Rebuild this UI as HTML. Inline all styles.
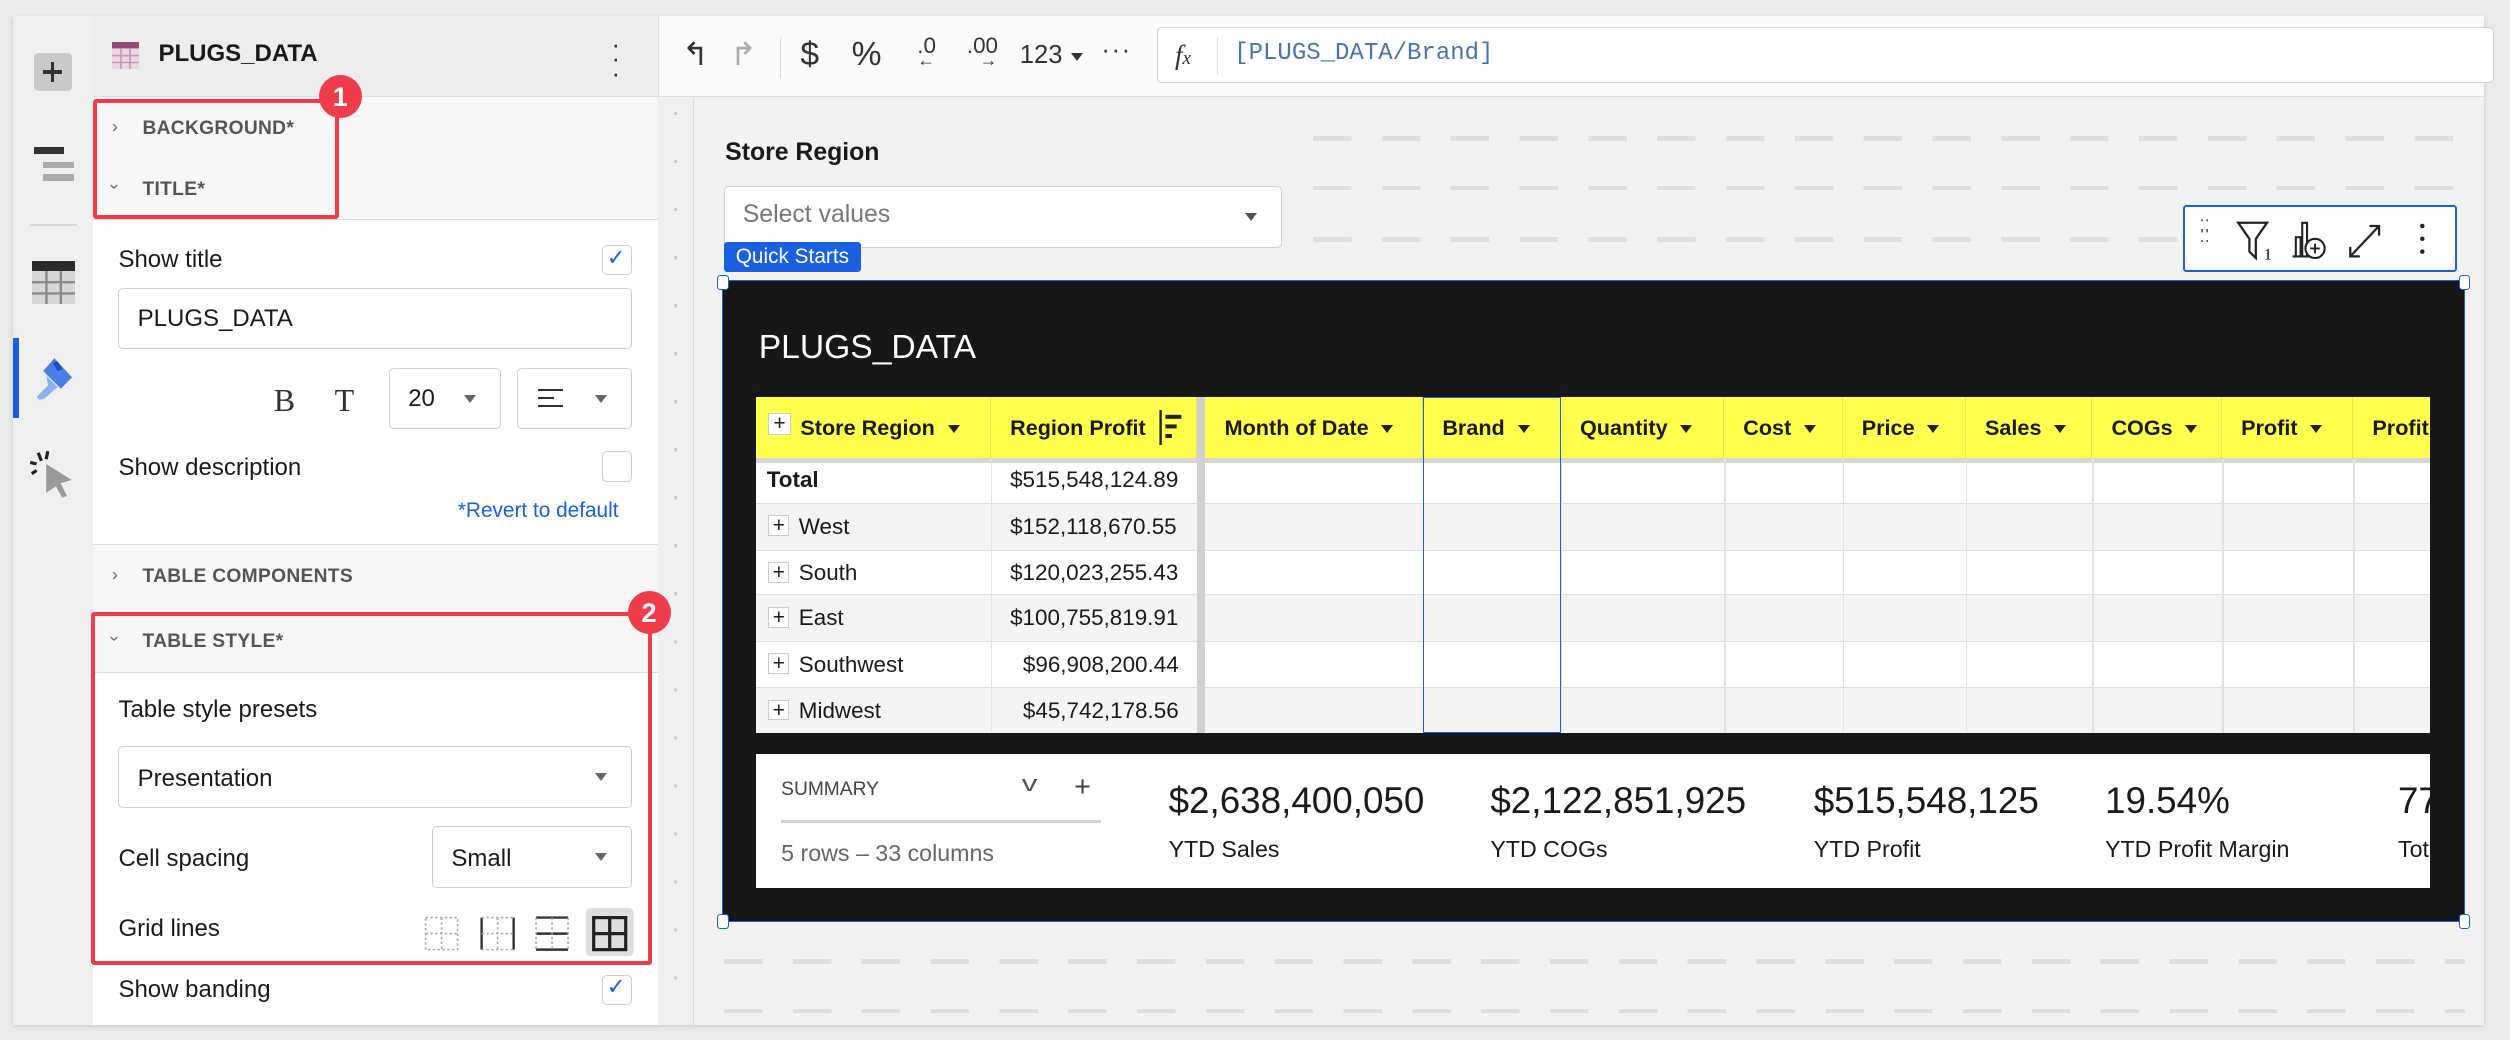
<!DOCTYPE html>
<html><head><meta charset="utf-8"><style>
html,body{margin:0;padding:0;background:#ebebeb;width:2510px;height:1040px;overflow:hidden}
#w{zoom:1.6008;position:relative;width:1568px;height:650px;font-family:"Liberation Sans",sans-serif;color:#1a1a1a}
.a{position:absolute}
.t{position:absolute;white-space:nowrap;line-height:1}
.sec{position:absolute;left:58px;width:353px;background:#f7f7f7;border-bottom:1px solid #dcdcdc;border-top:1px solid #dcdcdc}
.sec span{position:absolute;left:31px;font-size:12px;font-weight:bold;color:#555;letter-spacing:.2px}
.sec i{position:absolute;left:12px;font-style:normal;font-size:11px;color:#666}
.box{position:absolute;background:#fff;border:1px solid #d0d0d0;border-radius:3px;box-sizing:border-box}
.tri{position:absolute;width:0;height:0;border-left:4px solid transparent;border-right:4px solid transparent;border-top:5px solid #666}
.cb{position:absolute;width:19px;height:19px;border:1px solid #cfcfcf;border-radius:3px;box-sizing:border-box;background:#fff}
.lbl{font-size:15px}
.hd{position:absolute;top:248px;height:39px;border-right:1px solid #e6e64a;box-sizing:border-box;font-size:13.5px;font-weight:bold;line-height:39px;padding-left:12px;white-space:nowrap;overflow:hidden}
.hd b{display:inline-block;width:0;height:0;border-left:4px solid transparent;border-right:4px solid transparent;border-top:5px solid #222;margin-left:8px;vertical-align:middle}
.row{position:absolute;left:472px;width:1046px;border-bottom:1px solid #dedede;box-sizing:border-box}
.vl{position:absolute;top:287px;height:171px;width:1px;background:#e2e2e2}
.cell{position:absolute;font-size:14px;white-space:nowrap}
.pl{position:absolute;left:480px;width:13px;height:13px;border:1px solid #ccc;background:#fff;font-size:13px;line-height:12px;text-align:center;box-sizing:border-box}
.kv{position:absolute;top:487px;font-size:23px;white-space:nowrap}
.kl{position:absolute;top:522px;font-size:14.5px;white-space:nowrap}
.dash{position:absolute;left:820px;width:720px;height:3px;background:repeating-linear-gradient(90deg,#dedede 0 24px,transparent 24px 43px)}
</style></head><body><div id="w">
<div class="a" style="left:8px;top:10px;width:1544px;height:630px;background:#f2f2f2;box-shadow:0 1px 3px rgba(0,0,0,.15)"></div>
<div class="a" style="left:8px;top:10px;width:50px;height:630px;background:#efefef;border-right:1px solid #dcdcdc"></div>
<div class="a" style="left:21px;top:33px;width:24px;height:24px;background:#c9c9c9;border-radius:3px"></div>
<div class="a" style="left:27px;top:44px;width:12px;height:2px;background:#333"></div>
<div class="a" style="left:32px;top:39px;width:2px;height:12px;background:#333"></div>
<div class="a" style="left:21px;top:92px;width:19px;height:4px;background:#333"></div>
<div class="a" style="left:27px;top:101px;width:19px;height:4px;background:#aaa"></div>
<div class="a" style="left:27px;top:109px;width:19px;height:4px;background:#aaa"></div>
<div class="a" style="left:19px;top:140px;width:29px;height:1px;background:#d5d5d5"></div>
<div class="a" style="left:20px;top:163px;width:27px;height:6px;background:#2b2b2b"></div>
<svg class="a" style="left:20px;top:169px" width="27" height="21"><rect width="27" height="21" fill="#d7d7d7"/><path d="M0 7H27M0 14H27M9 0V21M18 0V21" stroke="#8a8a8a" stroke-width="1.5"/></svg>
<div class="a" style="left:8px;top:211px;width:4px;height:50px;background:#1a5fe0"></div>
<svg class="a" style="left:20px;top:222px" width="27" height="30"><path d="M14 2 L25 14 L18 21 L7 10 Z" fill="#4a7fe6"/><path d="M9 13 L16 20 L8 27 Q4 29 3 26 L10 19 Z" fill="#8fb0f0"/><path d="M13 5 L16 4 L19 9 L16 10Z" fill="#1f4fb0"/></svg>
<svg class="a" style="left:17px;top:280px" width="32" height="32"><path d="M12 10 L28 20 L21 22 L25 30 L22 31 L18 24 L12 28 Z" fill="#9a9a9a"/><path d="M7 3 L9 8 M2 9 L6 10 M3 16 L6 14 M13 2 L12 7" stroke="#222" stroke-width="2"/></svg>
<div class="a" style="left:58px;top:10px;width:353px;height:630px;background:#fff;border-right:1px solid #dcdcdc"></div>
<div class="a" style="left:58px;top:10px;width:353px;height:50px;background:#ededed"></div>
<svg class="a" style="left:70px;top:26px" width="17" height="17"><rect width="17" height="17" fill="#ead7e3"/><rect width="17" height="4" fill="#8e4b75"/><path d="M0 8.5H17M0 12.8H17M5.6 4V17M11.3 4V17" stroke="#c59ab7" stroke-width="1"/></svg>
<div class="t" style="left:99px;top:26px;font-size:15px;font-weight:bold">PLUGS_DATA</div>
<div class="t" style="left:382px;top:24px;font-size:16px;color:#333;line-height:.55">·<br>·<br>·</div>
<div class="sec" style="top:60px;height:38px"><i style="top:12px">›</i><span style="top:13px">BACKGROUND*</span></div>
<div class="sec" style="top:99px;height:38px;border-top:0"><i style="top:11px;transform:rotate(90deg)">›</i><span style="top:13px">TITLE*</span></div>
<div class="t lbl" style="left:74px;top:155px">Show title</div>
<div class="cb" style="left:376px;top:153px"></div><div class="t" style="left:379px;top:154px;color:#1a5fe0;font-size:14px">✓</div>
<div class="box" style="left:74px;top:180px;width:321px;height:38px"></div>
<div class="t lbl" style="left:86px;top:192px">PLUGS_DATA</div>
<div class="t" style="left:171px;top:240px;font-family:'Liberation Serif',serif;font-size:20px;color:#333">B</div>
<div class="t" style="left:209px;top:240px;font-family:'Liberation Serif',serif;font-size:20px;color:#333">T</div>
<div class="box" style="left:243px;top:230px;width:70px;height:38px"></div>
<div class="t lbl" style="left:255px;top:242px">20</div><div class="tri" style="left:290px;top:247px"></div>
<div class="box" style="left:323px;top:230px;width:72px;height:38px"></div>
<div class="a" style="left:336px;top:243px;width:16px;height:1.5px;background:#333"></div><div class="a" style="left:336px;top:248px;width:10px;height:1.5px;background:#333"></div><div class="a" style="left:336px;top:253px;width:16px;height:1.5px;background:#333"></div>
<div class="tri" style="left:372px;top:247px"></div>
<div class="t lbl" style="left:74px;top:285px">Show description</div>
<div class="cb" style="left:376px;top:282px"></div>
<div class="t" style="left:286px;top:313px;font-size:13px;color:#1a5fe0">*Revert to default</div>
<div class="sec" style="top:340px;height:39px"><i style="top:12px">›</i><span style="top:13px">TABLE COMPONENTS</span></div>
<div class="sec" style="top:380px;height:40px;border-top:0"><i style="top:12px;transform:rotate(90deg)">›</i><span style="top:14px">TABLE STYLE*</span></div>
<div class="t lbl" style="left:74px;top:436px">Table style presets</div>
<div class="box" style="left:74px;top:466px;width:321px;height:39px"></div>
<div class="t lbl" style="left:86px;top:479px">Presentation</div><div class="tri" style="left:372px;top:483px"></div>
<div class="t lbl" style="left:74px;top:529px">Cell spacing</div>
<div class="box" style="left:270px;top:516px;width:125px;height:39px"></div>
<div class="t lbl" style="left:282px;top:529px">Small</div><div class="tri" style="left:372px;top:533px"></div>
<div class="t lbl" style="left:74px;top:573px">Grid lines</div>
<svg class="a" style="left:265px;top:567px" width="132" height="30">
<g fill="none" stroke="#aaa" stroke-dasharray="1.5 1.5"><rect x="1" y="6" width="20" height="20"/><path d="M11 6V26M1 16H21"/></g>
<g fill="none"><path d="M36 6V26M56 6V26" stroke="#333" stroke-width="1.5"/><path d="M46 6V26M36 6H56M36 16H56M36 26H56" stroke="#aaa" stroke-dasharray="1.5 1.5"/></g>
<g fill="none"><path d="M70 6H90M70 16H90M70 26H90" stroke="#333" stroke-width="1.5"/><path d="M80 6V26M70 6V26M90 6V26" stroke="#aaa" stroke-dasharray="1.5 1.5"/></g>
<rect x="101" y="0" width="30" height="30" rx="3" fill="#dedede"/>
<g fill="none" stroke="#222" stroke-width="2"><rect x="106" y="6" width="20" height="20"/><path d="M116 6V26M106 16H126"/></g>
</svg>
<div class="t lbl" style="left:74px;top:611px">Show banding</div>
<div class="cb" style="left:376px;top:609px"></div><div class="t" style="left:379px;top:610px;color:#1a5fe0;font-size:14px">✓</div>
<div class="a" style="left:411px;top:61px;width:22px;height:579px;background:#efefef;border-right:1px solid #dadada"></div>
<div class="a" style="left:421px;top:70px;width:2px;height:560px;background:repeating-linear-gradient(180deg,#ccc 0 2px,transparent 2px 30px)"></div>
<div class="a" style="left:412px;top:10px;width:1140px;height:50px;background:#fafafa;border-bottom:1px solid #dcdcdc"></div>
<div class="t" style="left:426px;top:24px;font-size:20px;color:#333">↰</div>
<div class="t" style="left:456px;top:24px;font-size:20px;color:#aaa">↱</div>
<div class="a" style="left:487px;top:23px;width:1px;height:26px;background:#ddd"></div>
<div class="t" style="left:500px;top:24px;font-size:21px;color:#333">$</div>
<div class="t" style="left:532px;top:24px;font-size:21px;color:#333">%</div>
<div class="t" style="left:573px;top:22px;font-size:14px;color:#333">.0<br><span style="font-size:11px;position:relative;top:-6px">←</span></div>
<div class="t" style="left:604px;top:22px;font-size:14px;color:#333">.00<br><span style="font-size:11px;position:relative;top:-6px;left:8px">→</span></div>
<div class="t" style="left:637px;top:27px;font-size:16px;color:#333">123</div><div class="tri" style="left:669px;top:33px;border-top-color:#333"></div>
<div class="t" style="left:688px;top:24px;font-size:16px;color:#333;letter-spacing:1px">···</div>
<div class="box" style="left:723px;top:17px;width:835px;height:35px"></div>
<div class="t" style="left:734px;top:26px;font-size:17px;font-family:'Liberation Serif',serif;font-style:italic;color:#333">f<span style="font-size:12px">x</span></div>
<div class="a" style="left:760px;top:23px;width:1px;height:24px;background:#ddd"></div>
<div class="t" style="left:771px;top:26px;font-size:15px;font-family:'Liberation Mono',monospace;color:#4a72b0">[PLUGS_DATA/Brand]</div>
<div class="dash" style="top:85px"></div><div class="dash" style="top:116px"></div><div class="dash" style="top:148px"></div>
<div class="dash" style="top:599px;left:452px;width:1088px"></div><div class="dash" style="top:630px;left:452px;width:1088px"></div>
<div class="t" style="left:453px;top:88px;font-size:15.5px;font-weight:bold">Store Region</div>
<div class="box" style="left:452px;top:116px;width:349px;height:39px"></div>
<div class="t" style="left:464px;top:127px;font-size:15.5px;color:#777">Select values</div><div class="tri" style="left:778px;top:133px;border-top-color:#555"></div>
<div class="a" style="left:452px;top:151px;width:86px;height:19px;background:#1a5fe0;border-radius:2px;color:#fff;font-size:13px;line-height:19px;text-align:center">Quick Starts</div>
<div class="a" style="left:1364px;top:128px;width:171px;height:42px;background:#fff;border:1.5px solid #1a5fe0;border-radius:2px;box-sizing:border-box"></div>
<div class="t" style="left:1374px;top:138px;font-size:10px;line-height:.7;color:#555">⁚⁚<br>⁚⁚</div>
<svg class="a" style="left:1396px;top:136px" width="120" height="28">
<path d="M2 3H20L13 13V25L9 21V13Z" fill="none" stroke="#222" stroke-width="1.4"/><text x="18" y="26" font-size="10" font-family="Liberation Serif">1</text>
<path d="M38 24V12H41V24M42 24V3H45V24M36 24H50" fill="none" stroke="#222" stroke-width="1.3"/><circle cx="50" cy="19" r="6" fill="#fff" stroke="#222" stroke-width="1.3"/><path d="M47 19H53M50 16V22" stroke="#222" stroke-width="1.2"/>
<path d="M72 24L90 5M84 5H90V11M72 18V24H78" fill="none" stroke="#222" stroke-width="1.4"/>
<circle cx="117" cy="5" r="1.4" fill="#222"/><circle cx="117" cy="13" r="1.4" fill="#222"/><circle cx="117" cy="21" r="1.4" fill="#222"/>
</svg>
<div class="a" style="left:451px;top:175px;width:1089px;height:401px;background:#171717;border:1px solid #1a5fe0;box-sizing:border-box"></div>
<div class="a" style="left:448px;top:172px;width:6px;height:8px;background:#fff;border:1px solid #1a5fe0;border-radius:2px"></div>
<div class="a" style="left:448px;top:571px;width:6px;height:8px;background:#fff;border:1px solid #1a5fe0;border-radius:2px"></div>
<div class="a" style="left:1536px;top:172px;width:6px;height:8px;background:#fff;border:1px solid #1a5fe0;border-radius:2px"></div>
<div class="a" style="left:1536px;top:571px;width:6px;height:8px;background:#fff;border:1px solid #1a5fe0;border-radius:2px"></div>
<div class="t" style="left:474px;top:207px;font-size:21px;color:#fff">PLUGS_DATA</div>
<div class="a" style="left:472px;top:248px;width:1046px;height:39px;background:#ffff4d"></div>
<div class="hd" style="left:472px;width:147px;padding-left:28px">Store Region<b></b></div>
<div class="a" style="left:480px;top:258px;width:14px;height:14px;background:#fff;border:1px solid #ccc;box-sizing:border-box;font-size:13px;line-height:12px;text-align:center">+</div>
<div class="hd" style="left:619px;width:129px">Region Profit</div>
<svg class="a" style="left:724px;top:256px" width="16" height="22"><path d="M1 0V22" stroke="#222" stroke-width="1.5"/><rect x="4" y="3" width="10" height="2.5" fill="#222"/><rect x="4" y="9" width="7" height="2.5" fill="#222"/><rect x="4" y="15" width="4" height="2.5" fill="#222"/></svg>
<div class="hd" style="left:753px;width:136px">Month of Date<b></b></div>
<div class="hd" style="left:889px;width:86px">Brand<b></b></div>
<div class="hd" style="left:975px;width:102px">Quantity<b></b></div>
<div class="hd" style="left:1077px;width:74px">Cost<b></b></div>
<div class="hd" style="left:1151px;width:77px">Price<b></b></div>
<div class="hd" style="left:1228px;width:79px">Sales<b></b></div>
<div class="hd" style="left:1307px;width:81px">COGs<b></b></div>
<div class="hd" style="left:1388px;width:82px">Profit<b></b></div>
<div class="hd" style="left:1470px;width:48px;border-right:0">Profit</div>
<div class="a" style="left:472px;top:286px;width:1046px;height:3px;background:#d6d6d6"></div>
<div class="row" style="top:289px;height:26px;background:#fff"></div>
<div class="row" style="top:315px;height:29px;background:#f4f4f4"></div>
<div class="row" style="top:344px;height:28px;background:#fff"></div>
<div class="row" style="top:372px;height:29px;background:#f4f4f4"></div>
<div class="row" style="top:401px;height:29px;background:#fff"></div>
<div class="row" style="top:430px;height:28px;background:#f4f4f4;border-bottom:0"></div>
<div class="vl" style="left:619px"></div>
<div class="a" style="left:748px;top:248px;width:5px;height:210px;background:#d0d0d0"></div>
<div class="vl" style="left:975px"></div><div class="vl" style="left:1077px"></div><div class="vl" style="left:1151px"></div><div class="vl" style="left:1228px"></div><div class="vl" style="left:1307px"></div><div class="vl" style="left:1388px"></div><div class="vl" style="left:1470px"></div>
<div class="a" style="left:889px;top:248px;width:86px;height:210px;border:1px solid #1a5fe0;box-sizing:border-box"></div>
<div class="cell" style="left:479px;top:292px;font-weight:bold">Total</div>
<div class="cell" style="left:631px;top:292px">$515,548,124.89</div>
<div class="pl" style="top:322px">+</div><div class="cell" style="left:499px;top:321px">West</div><div class="cell" style="left:631px;top:321px">$152,118,670.55</div>
<div class="pl" style="top:351px">+</div><div class="cell" style="left:499px;top:350px">South</div><div class="cell" style="left:631px;top:350px">$120,023,255.43</div>
<div class="pl" style="top:379px">+</div><div class="cell" style="left:499px;top:378px">East</div><div class="cell" style="left:631px;top:378px">$100,755,819.91</div>
<div class="pl" style="top:408px">+</div><div class="cell" style="left:499px;top:407px">Southwest</div><div class="cell" style="left:639px;top:407px">$96,908,200.44</div>
<div class="pl" style="top:437px">+</div><div class="cell" style="left:499px;top:436px">Midwest</div><div class="cell" style="left:639px;top:436px">$45,742,178.56</div>
<div class="a" style="left:472px;top:471px;width:1046px;height:84px;background:#fff;overflow:hidden">
<div class="t" style="left:16px;top:16px;font-size:12px;color:#444">SUMMARY</div>
<div class="t" style="left:168px;top:12px;font-size:14px;color:#555;transform:scaleX(1.4)">v</div>
<div class="t" style="left:199px;top:12px;font-size:18px;color:#444">+</div>
<div class="a" style="left:16px;top:41px;width:200px;height:2px;background:#d2d2d2"></div>
<div class="t" style="left:16px;top:55px;font-size:14.5px;color:#666">5 rows – 33 columns</div>
<div class="kv" style="left:258px;top:16px">$2,638,400,050</div><div class="kl" style="left:258px;top:51px">YTD Sales</div>
<div class="kv" style="left:459px;top:16px">$2,122,851,925</div><div class="kl" style="left:459px;top:51px">YTD COGs</div>
<div class="kv" style="left:661px;top:16px">$515,548,125</div><div class="kl" style="left:661px;top:51px">YTD Profit</div>
<div class="kv" style="left:843px;top:16px">19.54%</div><div class="kl" style="left:843px;top:51px">YTD Profit Margin</div>
<div class="kv" style="left:1026px;top:16px">77</div><div class="kl" style="left:1026px;top:51px">Total</div>
</div>
<!-- red annotations on top -->
<div class="a" style="left:58px;top:62px;width:154px;height:75px;border:3px solid #f03c4a;box-sizing:border-box;border-radius:2px"></div>
<div class="a" style="left:199px;top:47px;width:27px;height:27px;border-radius:50%;background:#f03c4a;color:#fff;font-weight:bold;font-size:17px;text-align:center;line-height:27px">1</div>
<div class="a" style="left:57px;top:382px;width:350px;height:221px;border:3px solid #f03c4a;box-sizing:border-box;border-radius:2px"></div>
<div class="a" style="left:392px;top:369px;width:27px;height:27px;border-radius:50%;background:#f03c4a;color:#fff;font-weight:bold;font-size:17px;text-align:center;line-height:27px">2</div>
</div></body></html>
